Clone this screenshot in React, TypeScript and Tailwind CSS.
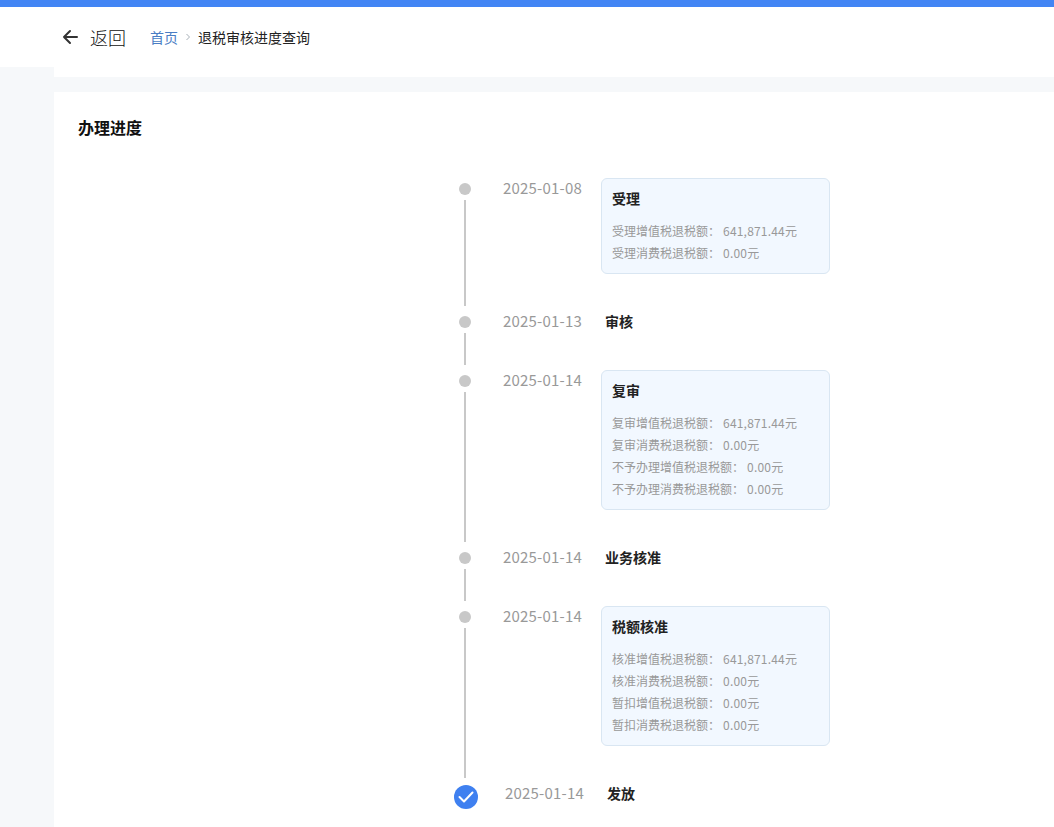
type Item = { date: string; title: string; lines?: [string, string][] };
const items: Item[] = [
  { date: "2025-01-08", title: "受理", lines: [["受理增值税退税额：", "641,871.44元"], ["受理消费税退税额：", "0.00元"]] },
  { date: "2025-01-13", title: "审核" },
  { date: "2025-01-14", title: "复审", lines: [["复审增值税退税额：", "641,871.44元"], ["复审消费税退税额：", "0.00元"], ["不予办理增值税退税额：", "0.00元"], ["不予办理消费税退税额：", "0.00元"]] },
  { date: "2025-01-14", title: "业务核准" },
  { date: "2025-01-14", title: "税额核准", lines: [["核准增值税退税额：", "641,871.44元"], ["核准消费税退税额：", "0.00元"], ["暂扣增值税退税额：", "0.00元"], ["暂扣消费税退税额：", "0.00元"]] },
];

function Row({ item }: { item: Item }) {
  return (
    <div className="flex">
      <div className="flex w-[24px] flex-col items-center">
        <div className="mt-[5px] h-[12px] w-[12px] rounded-full bg-[#c8c8c8]" />
        <div className="my-[5px] w-[2px] flex-1 bg-[#c8c8c8]" />
      </div>
      <div className="ml-[26px] h-[22px] w-[98px] text-[15px] leading-[20px] tracking-[0.2px] text-[#999999]">{item.date}</div>
      <div className="pb-[37px]">
        {item.lines ? (
          <div className="w-[229px] rounded-[6px] border border-[#d9e6f2] bg-[#f2f8ff] px-[10px] pt-[9px] pb-[8px]">
            <div className="mb-[11px] h-[22px] text-[14px] leading-[20px] font-bold text-[#222222]">{item.title}</div>
            {item.lines.map(([k, v]) => (
              <div key={k} className="flex h-[22px] text-[12px] leading-[20px] text-[#999999]">
                <span>{k}</span>
                <span className="ml-[3px] tracking-[0.2px]">{v}</span>
              </div>
            ))}
          </div>
        ) : (
          <div className="ml-[4px] h-[22px] text-[14px] leading-[20px] font-bold text-[#222222]">{item.title}</div>
        )}
      </div>
    </div>
  );
}

export default function App() {
  return (
    <div className="flex h-screen flex-col overflow-hidden bg-[#f6f8fa] font-['Noto_Sans_CJK_SC','Noto_Sans',sans-serif]">
      <div className="h-[7px] shrink-0 bg-[#4285f4]" />
      <div className="flex h-[60px] shrink-0 items-center bg-white pl-[62px]">
        <svg width="16" height="16" viewBox="0 0 16 16" fill="none" stroke="#333333" strokeWidth="2" strokeLinecap="round" strokeLinejoin="round">
          <path d="M15 8H2M8 2 2 8l6 6" />
        </svg>
        <span className="ml-[12px] text-[18px] font-light text-[#111111]">返回</span>
        <span className="ml-[24px] text-[14px] text-[#4a7dc4]">首页</span>
        <svg className="mx-[6px]" width="8" height="8" viewBox="0 0 8 8" fill="none" stroke="#a8b0b8" strokeWidth="1">
          <path d="M2.5 1 5.5 4 2.5 7" />
        </svg>
        <span className="text-[14px] text-[#222222]">退税审核进度查询</span>
      </div>
      <div className="ml-[54px] flex min-h-0 flex-1 flex-col">
        <div className="h-[10px] shrink-0 bg-white" />
        <div className="h-[15px] shrink-0" />
        <div className="flex-1 bg-white pt-[23px]">
          <div className="pl-[24px] text-[16px] leading-[24px] font-bold text-[#111111]">办理进度</div>
          <div className="mt-[39px] pl-[399px]">
            {items.map((it, i) => (
              <Row key={i} item={it} />
            ))}
            <div className="flex">
              <div className="mt-[2px] ml-[1px] flex h-[24px] w-[24px] items-center justify-center rounded-full bg-[#3f80f0]">
                <svg width="16" height="12" viewBox="0 0 16 12" fill="none" stroke="#ffffff" strokeWidth="2" strokeLinecap="round" strokeLinejoin="round">
                  <path d="M1.5 6 6 10.5 14.5 1.5" />
                </svg>
              </div>
              <div className="ml-[27px] h-[22px] w-[98px] text-[15px] leading-[20px] tracking-[0.2px] text-[#999999]">2025-01-14</div>
              <div className="ml-[4px] h-[22px] text-[14px] leading-[20px] font-bold text-[#222222]">发放</div>
            </div>
          </div>
        </div>
      </div>
    </div>
  );
}
